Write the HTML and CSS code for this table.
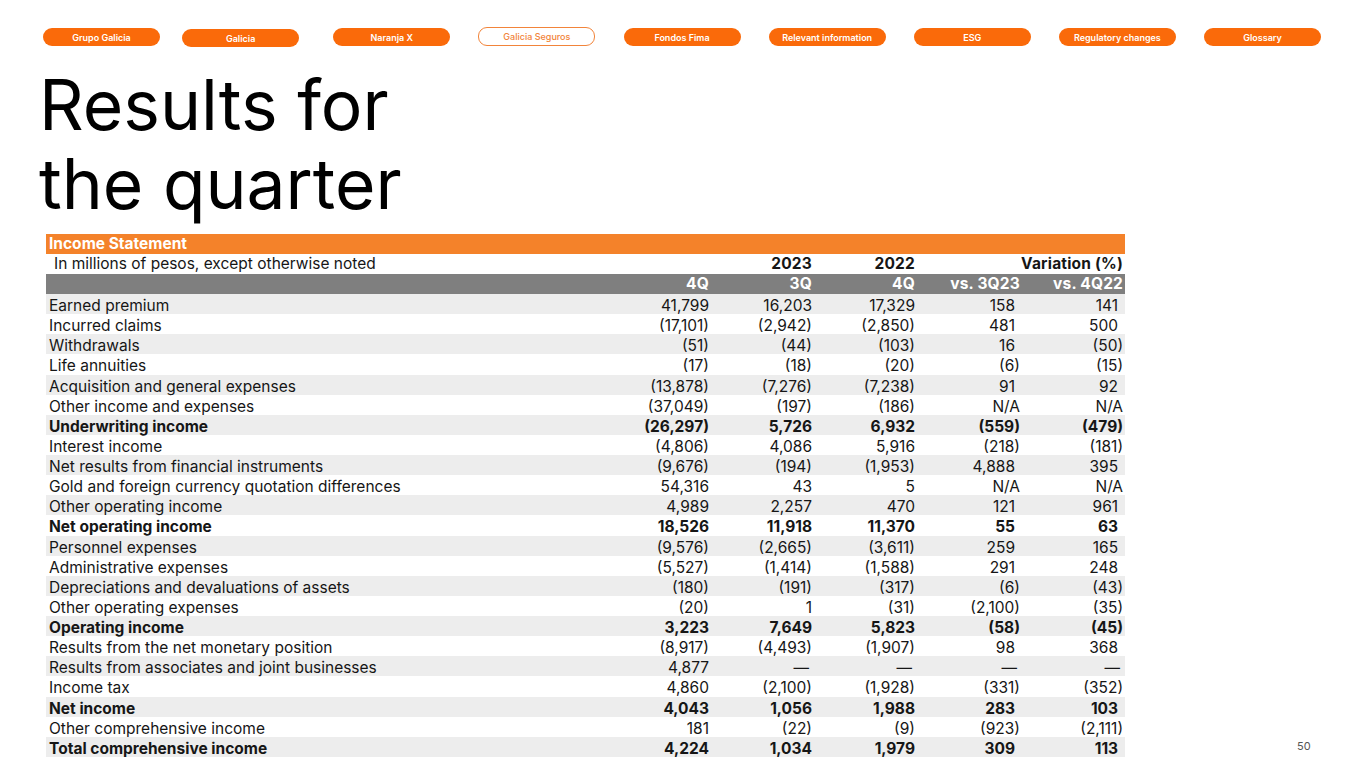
FILE: index.html
```html
<!DOCTYPE html>
<html lang="en">
<head>
<meta charset="utf-8">
<title>Results for the quarter</title>
<link rel="stylesheet" href="styles.css">
</head>
<body>
<nav class="nav">
  <a class="pill">Grupo Galicia</a>
  <a class="pill low">Galicia</a>
  <a class="pill">Naranja X</a>
  <a class="pill outline">Galicia Seguros</a>
  <a class="pill">Fondos Fima</a>
  <a class="pill">Relevant information</a>
  <a class="pill">ESG</a>
  <a class="pill">Regulatory changes</a>
  <a class="pill">Glossary</a>
</nav>
<h1 class="title">Results for<br>the quarter</h1>
<table class="stmt">
  <colgroup>
    <col class="c-label"><col class="c-num"><col class="c-num"><col class="c-num"><col class="c-var"><col class="c-var">
  </colgroup>
  <thead>
    <tr class="h-orange"><th colspan="6">Income Statement</th></tr>
    <tr class="h-years">
      <td class="sub">In millions of pesos, except otherwise noted</td>
      <td></td><th>2023</th><th>2022</th><th colspan="2">Variation (%)</th>
    </tr>
    <tr class="h-gray">
      <th></th><th>4Q</th><th>3Q</th><th>4Q</th><th>vs. 3Q23</th><th class="last">vs. 4Q22</th>
    </tr>
  </thead>
  <tbody>
    <tr><td>Earned premium</td><td>41,799</td><td>16,203</td><td>17,329</td><td class="p">158</td><td class="p">141</td></tr>
    <tr><td>Incurred claims</td><td>(17,101)</td><td>(2,942)</td><td>(2,850)</td><td class="p">481</td><td class="p">500</td></tr>
    <tr><td>Withdrawals</td><td>(51)</td><td>(44)</td><td>(103)</td><td class="p">16</td><td>(50)</td></tr>
    <tr><td>Life annuities</td><td>(17)</td><td>(18)</td><td>(20)</td><td>(6)</td><td>(15)</td></tr>
    <tr><td>Acquisition and general expenses</td><td>(13,878)</td><td>(7,276)</td><td>(7,238)</td><td class="p">91</td><td class="p">92</td></tr>
    <tr><td>Other income and expenses</td><td>(37,049)</td><td>(197)</td><td>(186)</td><td>N/A</td><td>N/A</td></tr>
    <tr class="b"><td>Underwriting income</td><td>(26,297)</td><td>5,726</td><td>6,932</td><td>(559)</td><td>(479)</td></tr>
    <tr><td>Interest income</td><td>(4,806)</td><td>4,086</td><td>5,916</td><td>(218)</td><td>(181)</td></tr>
    <tr><td>Net results from financial instruments</td><td>(9,676)</td><td>(194)</td><td>(1,953)</td><td class="p">4,888</td><td class="p">395</td></tr>
    <tr><td>Gold and foreign currency quotation differences</td><td>54,316</td><td>43</td><td>5</td><td>N/A</td><td>N/A</td></tr>
    <tr><td>Other operating income</td><td>4,989</td><td>2,257</td><td>470</td><td class="p">121</td><td class="p">961</td></tr>
    <tr class="b"><td>Net operating income</td><td>18,526</td><td>11,918</td><td>11,370</td><td class="p">55</td><td class="p">63</td></tr>
    <tr><td>Personnel expenses</td><td>(9,576)</td><td>(2,665)</td><td>(3,611)</td><td class="p">259</td><td class="p">165</td></tr>
    <tr><td>Administrative expenses</td><td>(5,527)</td><td>(1,414)</td><td>(1,588)</td><td class="p">291</td><td class="p">248</td></tr>
    <tr><td>Depreciations and devaluations of assets</td><td>(180)</td><td>(191)</td><td>(317)</td><td>(6)</td><td>(43)</td></tr>
    <tr><td>Other operating expenses</td><td>(20)</td><td>1</td><td>(31)</td><td>(2,100)</td><td>(35)</td></tr>
    <tr class="b"><td>Operating income</td><td>3,223</td><td>7,649</td><td>5,823</td><td>(58)</td><td>(45)</td></tr>
    <tr><td>Results from the net monetary position</td><td>(8,917)</td><td>(4,493)</td><td>(1,907)</td><td class="p">98</td><td class="p">368</td></tr>
    <tr><td>Results from associates and joint businesses</td><td>4,877</td><td class="d">—</td><td class="d">—</td><td class="d">—</td><td class="d">—</td></tr>
    <tr><td>Income tax</td><td>4,860</td><td>(2,100)</td><td>(1,928)</td><td>(331)</td><td>(352)</td></tr>
    <tr class="b"><td>Net income</td><td>4,043</td><td>1,056</td><td>1,988</td><td class="p">283</td><td class="p">103</td></tr>
    <tr><td>Other comprehensive income</td><td>181</td><td>(22)</td><td>(9)</td><td>(923)</td><td>(2,111)</td></tr>
    <tr class="b"><td>Total comprehensive income</td><td>4,224</td><td>1,034</td><td>1,979</td><td class="p">309</td><td class="p">113</td></tr>
  </tbody>
</table>
<footer class="pageno">50</footer>
</body>
</html>
```

FILE: styles.css
```css
* { box-sizing: border-box; }
html, body { margin: 0; padding: 0; background: #fff; }
body {
  font-family: Inter, "Noto Sans", "Liberation Sans", sans-serif;
  color: #161616;
  width: 1365px;
  height: 768px;
  overflow: hidden;
  position: relative;
}

.nav {
  display: flex;
  justify-content: space-between;
  align-items: flex-start;
  padding: 28px 44px 0 43px;
  height: 48px;
}
.pill {
  display: flex;
  align-items: center;
  justify-content: center;
  width: 117px;
  height: 18px;
  border-radius: 9px;
  background: #fa6a0a;
  color: #fff;
  font-size: 9px;
  font-weight: 600;
  text-decoration: none;
}
.pill.low { margin: 1px 6px 0 -6px; }
.pill.outline {
  background: #fff;
  border: 1px solid #f2843a;
  color: #f2843a;
  font-weight: 500;
  margin-top: -1px;
  height: 19px;
}

.title {
  margin: 18px 0 0 39px;
  font-size: 69.5px;
  line-height: 79px;
  font-weight: 400;
  color: #000;
}

.stmt {
  margin: 10px 0 0 46px;
  border-collapse: collapse;
  table-layout: fixed;
  width: 1079px;
  font-size: 15.5px;
}
.c-label { width: 560px; }
.c-num { width: 103px; }
.c-var { width: 105px; }

.stmt td, .stmt th {
  height: 20px;
  padding: 0;
  line-height: 20px;
  white-space: nowrap;
  text-align: right;
  font-weight: 400;
}
.stmt tbody td {
  height: 20.13px;
  padding-top: 3px;
  line-height: 17px;
}
.stmt td:first-child { text-align: left; padding-left: 3px; }
.stmt tr > :last-child { padding-right: 2px; }

.h-orange th {
  background: #f4822a;
  color: #fff;
  font-weight: 700;
  text-align: left;
  padding-left: 3px;
}
.h-years td.sub { padding-left: 8px; }
.h-years th { font-weight: 700; letter-spacing: 0.2px; }
.h-gray th {
  background: #7f7f7f;
  color: #fff;
  font-weight: 700;
  letter-spacing: 0.2px;
}

.stmt tbody tr:nth-child(odd) td { background: #ededed; }
.stmt tbody tr.b td { font-weight: 700; }
.stmt td.p { padding-right: 5px; }
.stmt tr > td.p:last-child { padding-right: 7px; }
.stmt td.d { padding-right: 3px; }
.stmt tr > td.d:last-child { padding-right: 5px; }

.pageno {
  position: absolute;
  left: 1297px;
  top: 739px;
  font-size: 11px;
  color: #555;
}
```
